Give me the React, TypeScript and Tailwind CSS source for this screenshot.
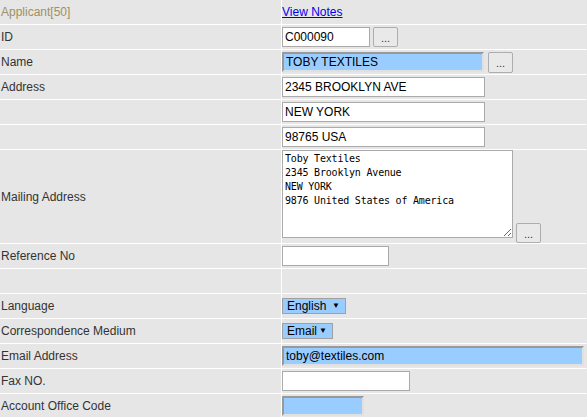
import type { ReactNode } from "react";

const font = { fontFamily: '"Liberation Sans", Arial, sans-serif' };

function Row({ label, children, muted }: { label?: string; children?: ReactNode; muted?: boolean }) {
  return (
    <div className="flex h-[25px] border-b border-white">
      <div
        className={`flex w-[282px] shrink-0 items-center border-r border-white pl-px text-[12px] ${
          muted ? "text-[#a09062]" : "text-[#333]"
        }`}
      >
        {label}
      </div>
      <div className="flex flex-1 items-center">{children}</div>
    </div>
  );
}

function TextBox({ value, width, hi }: { value?: string; width: string; hi?: boolean }) {
  return (
    <input
      readOnly
      value={value ?? ""}
      className={`h-[20px] ${width} px-[2px] text-[12px] text-black outline-none ${
        hi
          ? "border-2 border-t-[#999] border-l-[#999] border-r-[#e0e0e0] border-b-[#e0e0e0] bg-[#99ccff]"
          : "border border-[#aaa] bg-white"
      }`}
      style={font}
    />
  );
}

function DotsButton({ className = "" }: { className?: string }) {
  return (
    <button
      type="button"
      className={`h-[20px] w-[25px] rounded-[2px] border border-[#adadad] bg-[#e9e9e9] pt-[3px] text-[11px] leading-none text-[#333] ${className}`}
    >
      ...
    </button>
  );
}

function Pick({ value, width }: { value: string; width: string }) {
  return (
    <div
      className={`flex h-[16px] ${width} items-center border border-[#a0a0a0] bg-[#99ccff] pl-[4px] text-[12px] leading-none text-black`}
    >
      <span>{value}</span>
      <span className="ml-auto mr-[5px] text-[8px]">▼</span>
    </div>
  );
}

export default function App() {
  return (
    <div className="h-[417px] w-[587px] overflow-hidden bg-[#e6e6e6]" style={font}>
      <Row label="Applicant[50]" muted>
        <a href="#" className="text-[12px] text-[#0000ee] underline">
          View Notes
        </a>
      </Row>
      <Row label="ID">
        <TextBox value="C000090" width="w-[88px]" />
        <DotsButton className="ml-[3px]" />
      </Row>
      <Row label="Name">
        <TextBox value="TOBY TEXTILES" width="w-[202px]" hi />
        <DotsButton className="ml-[4px] h-[21px]" />
      </Row>
      <Row label="Address">
        <TextBox value="2345 BROOKLYN AVE" width="w-[203px]" />
      </Row>
      <Row>
        <TextBox value="NEW YORK" width="w-[203px]" />
      </Row>
      <Row>
        <TextBox value="98765 USA" width="w-[203px]" />
      </Row>
      <div className="flex h-[94px] border-b border-white">
        <div className="flex w-[282px] shrink-0 items-center border-r border-white pl-px text-[12px] text-[#333]">
          Mailing Address
        </div>
        <div className="flex flex-1 items-start">
          <textarea
            readOnly
            value={"Toby Textiles\n2345 Brooklyn Avenue\nNEW YORK\n9876 United States of America"}
            className="h-[88px] w-[231px] resize border border-[#aaa] bg-white px-[2px] pt-[1px] text-[10px] leading-[14px] tracking-[-0.2px] text-black outline-none"
            style={{ fontFamily: '"DejaVu Sans Mono", Consolas, monospace' }}
          />
          <DotsButton className="ml-[3px] mt-[73px]" />
        </div>
      </div>
      <Row label="Reference No">
        <TextBox width="w-[107px]" />
      </Row>
      <Row />
      <Row label="Language">
        <Pick value="English" width="w-[64px]" />
      </Row>
      <Row label="Correspondence Medium">
        <Pick value="Email" width="w-[51px]" />
      </Row>
      <Row label="Email Address">
        <TextBox value="toby@textiles.com" width="w-[302px]" hi />
      </Row>
      <Row label="Fax NO.">
        <TextBox width="w-[128px]" />
      </Row>
      <Row label="Account Office Code">
        <TextBox width="w-[82px]" hi />
      </Row>
    </div>
  );
}
